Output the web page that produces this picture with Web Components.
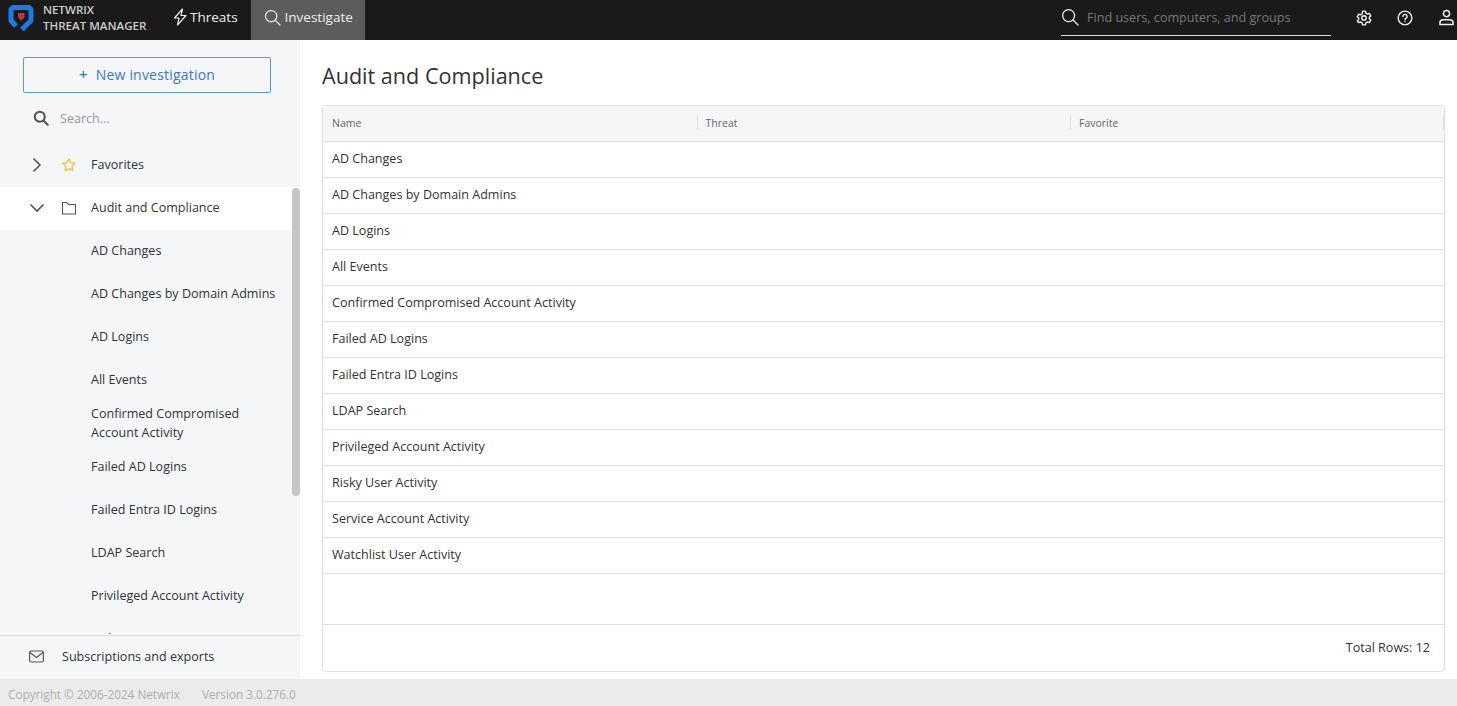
<!DOCTYPE html>
<html><head><meta charset="utf-8"><style>
html,body{margin:0;height:100%;overflow:hidden}
body{font-family:"Open Sans",sans-serif;color:#333}
</style></head><body>
<nt-app>
  <nt-topbar></nt-topbar>
  <nt-sidebar></nt-sidebar>
  <nt-table title="Audit and Compliance"></nt-table>
  <nt-footer></nt-footer>
</nt-app>
<script>
const rows=["AD Changes","AD Changes by Domain Admins","AD Logins","All Events","Confirmed Compromised Account Activity","Failed AD Logins","Failed Entra ID Logins","LDAP Search","Privileged Account Activity","Risky User Activity","Service Account Activity","Watchlist User Activity"];
const def=(n,html)=>customElements.define(n,class extends HTMLElement{constructor(){super();this.attachShadow({mode:"open"}).innerHTML=typeof html==="function"?html(this):html;}});
def("nt-app",`<style>:host{display:grid;grid-template-columns:300px 1fr;grid-template-rows:40px 639px 27px;height:706px;background:#fff}
::slotted(nt-topbar),::slotted(nt-footer){grid-column:1/3}</style><slot></slot>`);
const search=(s,c,w=1.3)=>`<svg width="${s}" height="${s}" viewBox="0 0 18 18" fill="none" stroke="${c}" stroke-width="${w}" stroke-linecap="round"><circle cx="7.6" cy="7.6" r="6"/><path d="M12 12l5 5"/></svg>`;
def("nt-topbar",`<style>:host{display:flex;align-items:stretch;background:#1a1a1a;color:#eee;height:40px}
.logo{display:flex;align-items:center;width:43px;padding:0 0 3px 8px;box-sizing:border-box}
.brand{width:122px;font-size:11.55px;line-height:16px;font-weight:600;color:#ccc;padding-top:2px;box-sizing:border-box;white-space:nowrap}
.tab{display:flex;align-items:center;gap:2px;font-size:13.5px;padding:0 13px 6px 8px;color:#eee}
.tab.on{background:#5c5c5c;width:114px;box-sizing:border-box;padding:0 0 6px 13px;gap:4px}
.sp{flex:1}
.find{width:270px;border-bottom:1px solid #ddd;display:flex;align-items:center;gap:8px;padding-bottom:1px;box-sizing:border-box;height:36px;font-size:12.6px;color:#777}
.ic{display:flex;align-items:center;justify-content:center;width:20px}
.icons{display:flex;align-items:center;gap:21.5px;width:112px;margin-left:14px;padding:0 0 5px 8.5px;box-sizing:border-box}
.ic svg{display:block}
</style>
<div class="logo"><svg width="26" height="27" viewBox="0 0 26 27" fill="none"><path d="M8 21L3 15.500V4.500L5 2.500H21L23 4.500V15.500L14 24.500" stroke="#1c7ae0" stroke-width="5" stroke-linejoin="round"/><path d="M10 8h6.500v4.500l-3.200 3-3.300-3z" fill="#c8323a"/></svg></div>
<div class="brand">NETWRIX<br>THREAT MANAGER</div>
<div class="tab"><svg width="15" height="18" viewBox="0 0 15 18" fill="none" stroke="#eee" stroke-width="1.2" stroke-linejoin="round"><path d="M9.500 1L1.500 10h4.500l-1.500 7 8.500-9.500H8z"/></svg>Threats</div>
<div class="tab on">${search(17,"#eee")}Investigate</div>
<div class="sp"></div>
<div class="find">${search(18,"#eee")}<span>Find users, computers, and groups</span></div>
<div class="icons">
<div class="ic"><svg width="16" height="16" viewBox="0 0 18 18" fill="none" stroke="#eee" stroke-width="1.6" stroke-linejoin="round"><path d="M7.400 1.300h3.200l.5 2.200 1.800 1 2.100-.7 1.600 2.800-1.600 1.500v1.800l1.600 1.500-1.600 2.800-2.100-.7-1.800 1-.5 2.200H7.400l-.5-2.200-1.800-1-2.100.7L1.400 12.400 3 10.900V9.100L1.400 7.600 3 4.800l2.100.7 1.800-1z"/><circle cx="9" cy="9" r="2.500"/></svg></div>
<div class="ic"><svg width="16" height="16" viewBox="0 0 18 18" fill="none" stroke="#eee" stroke-width="1.600" stroke-linecap="round"><circle cx="9" cy="9" r="7.700"/><path d="M6.700 7.200a2.300 2.300 0 1 1 3.500 2c-.8.500-1.200.9-1.200 1.700"/><path d="M9 13.200v.1"/></svg></div>
<div class="ic"><svg width="15" height="17" viewBox="0 0 16 18" fill="none" stroke="#eee" stroke-width="1.600"><circle cx="8" cy="4.800" r="3.300"/><path d="M1 16.500v-1.800c0-2 1.500-3.200 3.500-3.200h7c2 0 3.500 1.200 3.500 3.200v1.800z"/></svg></div>
</div>`);
def("nt-tree-item",el=>`<style>:host{display:flex;align-items:center;height:43px;flex:none;box-sizing:border-box;padding:0 20px 2px 91px;font-size:12.56px;line-height:19px;color:#333;position:relative}
:host([open]){background:#fff}
:host([tall]){height:44px;padding-bottom:3px}
.twist{position:absolute;left:29px;top:13px}
.ico{position:absolute;left:61px;top:13px}
svg{display:block}</style>${el.getAttribute("head")||""}<span><slot></slot></span>`);
def("nt-sidebar",`<style>:host{display:flex;flex-direction:column;background:#f4f6f8;min-height:0;height:639px;overflow:hidden;position:relative}
.btn{margin:17px 29px 0 23px;height:36px;border:1px solid #5b9bd5;border-radius:2px;color:#3a78c9;font-size:14px;display:flex;align-items:center;justify-content:center;gap:8px;flex:none;box-sizing:border-box;letter-spacing:.2px;padding-bottom:2px}
.plus{font-size:15px;line-height:1;font-weight:600}
.s{display:flex;align-items:center;gap:11px;height:50px;padding-left:33px;font-size:12.56px;color:#999;flex:none}
.tree{flex:1;min-height:0;overflow:hidden;position:relative;padding-top:1px;margin-bottom:1px}
.list{display:flex;flex-direction:column}
.bar{position:absolute;right:0;top:45px;width:8px;height:308px;background:#c6c6c6;border-radius:4px}
.sub{flex:none;height:44px;border-top:1px solid #ddd;display:flex;align-items:center;gap:18px;padding:0 0 2px 29px;box-sizing:border-box;font-size:12.56px;color:#333}
svg{display:block}
</style>
<div class="btn"><span class="plus">+</span><span>New investigation</span></div>
<div class="s"><svg width="16" height="16" viewBox="0 0 18 18" fill="none" stroke="#555" stroke-width="2.400" stroke-linecap="round"><circle cx="7.600" cy="7.600" r="5.600"/><path d="M12 12l4.500 4.500"/></svg><span>Search...</span></div>
<div class="tree"><div class="list">
<nt-tree-item head='<svg class="twist" width="16" height="16" viewBox="0 0 16 16" fill="none" stroke="#555" stroke-width="1.600"><path d="M4.500 1.500l6.500 6.500-6.500 6.500"/></svg><svg class="ico" width="16" height="16" viewBox="0 0 16 16" fill="none" stroke="#eec23b" stroke-width="1.300" stroke-linejoin="round"><path d="M8 1.800l1.900 3.900 4.300.6-3.100 3 .7 4.300L8 11.600l-3.800 2 .7-4.300-3.100-3 4.300-.6z"/></svg>'>Favorites</nt-tree-item>
<nt-tree-item open head='<svg class="twist" width="16" height="16" viewBox="0 0 16 16" fill="none" stroke="#555" stroke-width="1.600"><path d="M1.500 4.500l6.500 6.500 6.500-6.500"/></svg><svg class="ico" width="16" height="16" viewBox="0 0 16 16" fill="none" stroke="#555" stroke-width="1.100" stroke-linejoin="round"><path d="M1.500 2.500h4.500l1.500 2h7v9.500h-13z"/></svg>'>Audit and Compliance</nt-tree-item>
${rows.slice(0,10).map((r,i)=>`<nt-tree-item${i===4?" tall":""}>${r}</nt-tree-item>`).join("")}
</div><div class="bar"></div></div>
<div class="sub"><svg width="15" height="13" viewBox="0 0 15 13" fill="none" stroke="#555" stroke-width="1.200" stroke-linejoin="round"><rect x=".6" y="1" width="13.800" height="11" rx="1.500"/><path d="M1 2.500l6.500 5 6.500-5"/></svg><span>Subscriptions and exports</span></div>`);
def("nt-table",el=>`<style>:host{display:flex;flex-direction:column;padding:0 12px 7px 22px;min-width:0;height:639px;box-sizing:border-box}
h1{font-size:21.6px;font-weight:400;margin:0;height:65px;display:flex;align-items:center;padding-top:6px;box-sizing:border-box;color:#333;flex:none}
.t{flex:1;border:1px solid #e0e0e0;border-radius:4px;display:flex;flex-direction:column;overflow:hidden;min-height:0}
.h,.r{display:grid;grid-template-columns:373.5px 373.5px 1fr;flex:none;border-bottom:1px solid #e0e0e0;box-sizing:border-box;height:36px;align-items:center}
.h{background:#f5f6f7;font-size:10.5px;color:#666;padding-bottom:2px}
.h span{padding-left:8px;border-left:1px solid transparent;line-height:14px;display:block}
.h span:first-child{border-left:0;padding-left:9px}
.h span+span{border-left-color:#ddd}
.h span:last-child{border-right:1px solid #ddd}
.r{font-size:12.56px;color:#333;padding-bottom:2px}.r span{padding-left:9px;white-space:nowrap}
.sp{flex:1}
.f{flex:none;height:47px;border-top:1px solid #e0e0e0;display:flex;align-items:center;justify-content:flex-end;padding:0 14px 2px 0;font-size:12.56px;box-sizing:border-box}
</style><h1>${el.getAttribute("title")}</h1>
<div class="t"><div class="h"><span>Name</span><span>Threat</span><span>Favorite</span></div>
${rows.map(r=>`<div class="r"><span>${r}</span></div>`).join("")}
<div class="sp"></div><div class="f">Total Rows: 12</div></div>`);
def("nt-footer",`<style>:host{display:flex;background:#ebebeb;color:#aeaeae;font-size:11.74px;line-height:16px;align-items:center;padding:3px 0 0 8px;box-sizing:border-box;gap:22px}</style><span>Copyright © 2006-2024 Netwrix</span><span>Version 3.0.276.0</span>`);
</script>
</body></html>
